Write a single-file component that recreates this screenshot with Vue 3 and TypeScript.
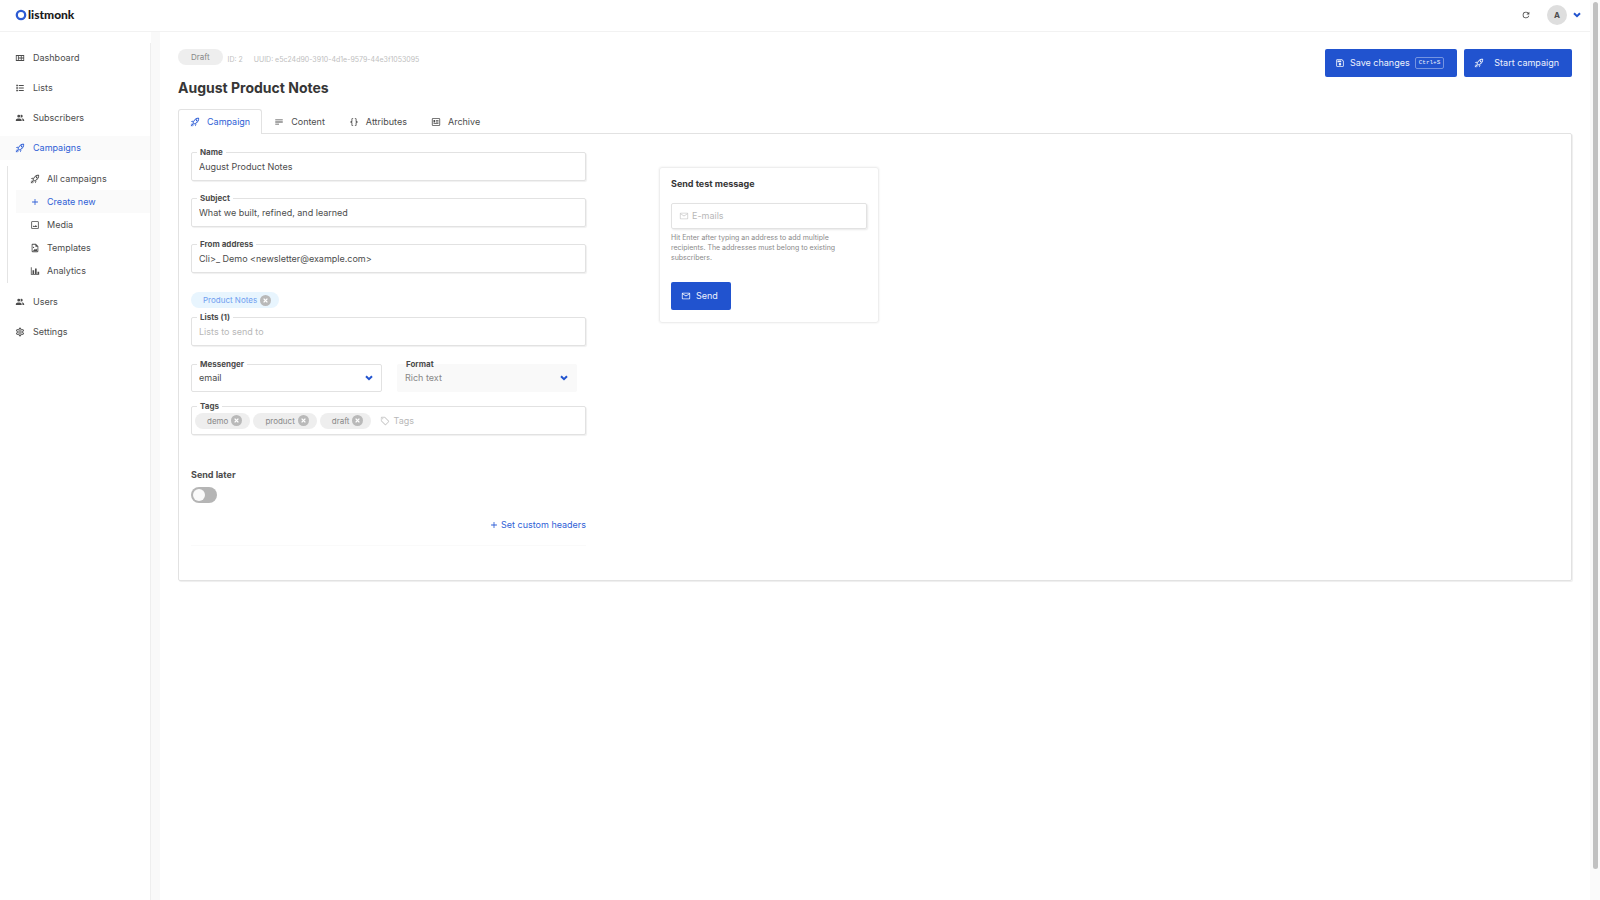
<script setup lang="ts">
import { ref } from 'vue'

const icons = {
  rocket:
    'M13.13 22.19L11.5 18.36C13.07 17.78 14.54 17 15.9 16.09L13.13 22.19M5.64 12.5L1.81 10.87L7.91 8.1C7 9.46 6.22 10.93 5.64 12.5M19.22 4C19.5 4 19.75 4 19.96 4.05C20.13 5.44 19.94 8.3 16.66 11.58C14.96 13.29 12.93 14.6 10.65 15.47L8.5 13.37C9.42 11.06 10.73 9.03 12.42 7.34C15.18 4.58 17.64 4 19.22 4M19.22 2C17.24 2 14.24 2.69 11 5.93C8.81 8.12 7.5 10.53 6.65 12.64C6.37 13.39 6.56 14.21 7.11 14.77L9.24 16.89C9.62 17.27 10.13 17.5 10.66 17.5C10.89 17.5 11.13 17.44 11.36 17.35C13.5 16.53 15.88 15.19 18.07 13C23.73 7.34 21.61 2.39 21.61 2.39S20.7 2 19.22 2M14.54 9.46C13.76 8.68 13.76 7.41 14.54 6.63S16.59 5.85 17.37 6.63C18.14 7.41 18.15 8.68 17.37 9.46C16.59 10.24 15.32 10.24 14.54 9.46M6.24 22L9.88 18.36C9.54 18.27 9.21 18.12 8.91 17.91L4.83 22H6.24M2 22H3.41L8.18 17.24L6.76 15.83L2 20.59V22M2 19.17L6.09 15.09C5.88 14.79 5.73 14.47 5.64 14.12L2 17.76V19.17Z',
  dashboard:
    'M2 5V19H22V5H2M4 7H7V17H4V7M9 7H14V11H9V7M9 13H14V17H9V13M16 7H20V11H16V7M16 13H20V17H16V13Z',
  list: 'M3,4H7V8H3V4M9,5V7H21V5H9M3,10H7V14H3V10M9,11V13H21V11H9M3,16H7V20H3V16M9,17V19H21V17H9',
  people:
    'M16 17V19H2V17S2 13 9 13 16 17 16 17M12.5 7.5A3.5 3.5 0 1 0 9 11A3.5 3.5 0 0 0 12.5 7.5M15.94 13A5.32 5.32 0 0 1 18 17V19H22V17S22 13.37 15.94 13M15 4A3.39 3.39 0 0 0 13.07 4.59A5 5 0 0 1 13.07 10.41A3.39 3.39 0 0 0 15 11A3.5 3.5 0 0 0 15 4Z',
  plus: 'M19,13H13V19H11V13H5V11H11V5H13V11H19V13Z',
  image:
    'M19,19H5V5H19M19,3H5A2,2 0 0,0 3,5V19A2,2 0 0,0 5,21H19A2,2 0 0,0 21,19V5A2,2 0 0,0 19,3M13.96,12.29L11.21,15.83L9.25,13.47L6.5,17H17.5L13.96,12.29Z',
  file: 'M14,2L20,8V20A2,2 0 0,1 18,22H6A2,2 0 0,1 4,20V4A2,2 0 0,1 6,2H14M18,20V9H13V4H6V20H18M17,13V19H7L12,14L14,16M10,10.5A1.5,1.5 0 0,1 8.5,12A1.5,1.5 0 0,1 7,10.5A1.5,1.5 0 0,1 8.5,9A1.5,1.5 0 0,1 10,10.5Z',
  chart: 'M22,21H2V3H4V19H6V10H10V19H12V6H16V19H18V14H22V21Z',
  cog: 'M12,8A4,4 0 0,1 16,12A4,4 0 0,1 12,16A4,4 0 0,1 8,12A4,4 0 0,1 12,8M12,10A2,2 0 0,0 10,12A2,2 0 0,0 12,14A2,2 0 0,0 14,12A2,2 0 0,0 12,10M10,22C9.75,22 9.54,21.82 9.5,21.58L9.13,18.93C8.5,18.68 7.96,18.34 7.44,17.94L4.95,18.95C4.73,19.03 4.46,18.95 4.34,18.73L2.34,15.27C2.21,15.05 2.27,14.78 2.46,14.63L4.57,12.97L4.5,12L4.57,11L2.46,9.37C2.27,9.22 2.21,8.95 2.34,8.73L4.34,5.27C4.46,5.05 4.73,4.96 4.95,5.05L7.44,6.05C7.96,5.66 8.5,5.32 9.13,5.07L9.5,2.42C9.54,2.18 9.75,2 10,2H14C14.25,2 14.46,2.18 14.5,2.42L14.87,5.07C15.5,5.32 16.04,5.66 16.56,6.05L19.05,5.05C19.27,4.96 19.54,5.05 19.66,5.27L21.66,8.73C21.79,8.95 21.73,9.22 21.54,9.37L19.43,11L19.5,12L19.43,13L21.54,14.63C21.73,14.78 21.79,15.05 21.66,15.27L19.66,18.73C19.54,18.95 19.27,19.04 19.05,18.95L16.56,17.95C16.04,18.34 15.5,18.68 14.87,18.93L14.5,21.58C14.46,21.82 14.25,22 14,22H10M11.25,4L10.88,6.61C9.68,6.86 8.62,7.5 7.85,8.39L5.44,7.35L4.69,8.65L6.8,10.2C6.4,11.37 6.4,12.64 6.8,13.8L4.68,15.36L5.43,16.66L7.86,15.62C8.63,16.5 9.68,17.14 10.87,17.38L11.24,20H12.76L13.13,17.39C14.32,17.14 15.37,16.5 16.14,15.62L18.57,16.66L19.32,15.36L17.2,13.81C17.6,12.64 17.6,11.37 17.2,10.2L19.31,8.65L18.56,7.35L16.15,8.39C15.38,7.5 14.32,6.86 13.12,6.62L12.75,4H11.25Z',
  text: 'M21,6V8H3V6H21M3,18H12V16H3V18M3,13H21V11H3V13Z',
  braces:
    'M8,3A2,2 0 0,0 6,5V9A2,2 0 0,1 4,11H3V13H4A2,2 0 0,1 6,15V19A2,2 0 0,0 8,21H10V19H8V14A2,2 0 0,0 6,12A2,2 0 0,0 8,10V5H10V3M16,3A2,2 0 0,1 18,5V9A2,2 0 0,0 20,11H21V13H20A2,2 0 0,0 18,15V19A2,2 0 0,1 16,21H14V19H16V14A2,2 0 0,1 18,12A2,2 0 0,1 16,10V5H14V3H16Z',
  news: 'M20 5L20 19L4 19L4 5H20M20 3H4C2.89 3 2 3.89 2 5V19C2 20.11 2.89 21 4 21H20C21.11 21 22 20.11 22 19V5C22 3.89 21.11 3 20 3M18 15H6V17H18V15M10 7H6V13H10V7M12 9H18V7H12V9M18 11H12V13H18V11Z',
  save: 'M17 3H5C3.89 3 3 3.9 3 5V19C3 20.1 3.89 21 5 21H19C20.1 21 21 20.1 21 19V7L17 3M19 19H5V5H16.17L19 7.83V19M12 12C10.34 12 9 13.34 9 15S10.34 18 12 18 15 16.66 15 15 13.66 12 12 12M6 6H15V10H6V6Z',
  mail: 'M22 6C22 4.9 21.1 4 20 4H4C2.9 4 2 4.9 2 6V18C2 19.1 2.9 20 4 20H20C21.1 20 22 19.1 22 18V6M20 6L12 11L4 6H20M20 18H4V8L12 13L20 8V18Z',
  tag: 'M21.41 11.58L12.41 2.58A2 2 0 0 0 11 2H4A2 2 0 0 0 2 4V11A2 2 0 0 0 2.59 12.42L11.59 21.42A2 2 0 0 0 13 22A2 2 0 0 0 14.41 21.41L21.41 14.41A2 2 0 0 0 22 13A2 2 0 0 0 21.41 11.58M13 20L4 11V4H11L20 13M6.5 5A1.5 1.5 0 1 1 5 6.5A1.5 1.5 0 0 1 6.5 5Z',
  refresh:
    'M17.65,6.35C16.2,4.9 14.21,4 12,4A8,8 0 0,0 4,12A8,8 0 0,0 12,20C15.73,20 18.84,17.45 19.73,14H17.65C16.83,16.33 14.61,18 12,18A6,6 0 0,1 6,12A6,6 0 0,1 12,6C13.66,6 15.14,6.69 16.22,7.78L13,11H20V4L17.65,6.35Z',
}

type IconName = keyof typeof icons
interface NavItem {
  label: string
  icon: IconName
  active?: boolean
  children?: NavItem[]
}

const nav: NavItem[] = [
  { label: 'Dashboard', icon: 'dashboard' },
  { label: 'Lists', icon: 'list' },
  { label: 'Subscribers', icon: 'people' },
  {
    label: 'Campaigns',
    icon: 'rocket',
    active: true,
    children: [
      { label: 'All campaigns', icon: 'rocket' },
      { label: 'Create new', icon: 'plus', active: true },
      { label: 'Media', icon: 'image' },
      { label: 'Templates', icon: 'file' },
      { label: 'Analytics', icon: 'chart' },
    ],
  },
  { label: 'Users', icon: 'people' },
  { label: 'Settings', icon: 'cog' },
]

const tabs: NavItem[] = [
  { label: 'Campaign', icon: 'rocket', active: true },
  { label: 'Content', icon: 'text' },
  { label: 'Attributes', icon: 'braces' },
  { label: 'Archive', icon: 'news' },
]

const name = ref('August Product Notes')
const subject = ref('What we built, refined, and learned')
const from = ref('Cli>_ Demo <newsletter@example.com>')
const lists = ref(['Product Notes'])
const tags = ref(['demo', 'product', 'draft'])
const sendLater = ref(false)

const remove = (items: string[], item: string) => {
  items.splice(items.indexOf(item), 1)
}
</script>

<template>
  <div class="app">
    <div class="page">
      <header class="topbar">
        <a href="#" class="logo">
          <svg viewBox="0 0 12 12"><circle cx="6" cy="6" r="4.2" /></svg>
          <span>listmonk</span>
        </a>
        <div class="user">
          <button type="button" class="plain" aria-label="Reload">
            <svg class="icon" viewBox="0 0 24 24"><path :d="icons.refresh" /></svg>
          </button>
          <button type="button" class="plain account" aria-label="Account">
            <span class="avatar">A</span>
            <svg class="chevron" viewBox="0 0 8 6"><path d="M1 1.2L4 4.2L7 1.2" /></svg>
          </button>
        </div>
      </header>

      <div class="body">
        <nav class="sidebar">
          <ul class="menu">
            <li v-for="item in nav" :key="item.label">
              <a href="#" class="link" :class="{ active: item.active }">
                <svg class="icon" viewBox="0 0 24 24"><path :d="icons[item.icon]" /></svg>{{ item.label }}
              </a>
              <ul v-if="item.children" class="submenu">
                <li v-for="sub in item.children" :key="sub.label">
                  <a href="#" class="link sub" :class="{ active: sub.active }">
                    <svg class="icon" viewBox="0 0 24 24"><path :d="icons[sub.icon]" /></svg>{{ sub.label }}
                  </a>
                </li>
              </ul>
            </li>
          </ul>
        </nav>

        <main class="main">
          <div class="heading">
            <div>
              <div class="meta">
                <span class="status">Draft</span>
                <span class="ids"><span>ID: 2</span><span>UUID: e5c24d90-3910-4d1e-9579-44e3f1053095</span></span>
              </div>
              <h1>August Product Notes</h1>
            </div>
            <div class="actions">
              <button type="button" class="btn">
                <svg class="icon" viewBox="0 0 24 24"><path :d="icons.save" /></svg>
                <span>Save changes</span><kbd>Ctrl+S</kbd>
              </button>
              <button type="button" class="btn start">
                <svg class="icon" viewBox="0 0 24 24"><path :d="icons.rocket" /></svg>
                <span>Start campaign</span>
              </button>
            </div>
          </div>

          <div class="tabs" role="tablist">
            <button
              v-for="tab in tabs"
              :key="tab.label"
              type="button"
              role="tab"
              class="tab"
              :class="{ active: tab.active }"
              :aria-selected="!!tab.active"
            >
              <svg class="icon" viewBox="0 0 24 24"><path :d="icons[tab.icon]" /></svg>{{ tab.label }}
            </button>
          </div>

          <section class="panel">
            <form @submit.prevent>
              <div class="field">
                <label for="name">Name</label>
                <input id="name" v-model="name" class="box" type="text" />
              </div>
              <div class="field">
                <label for="subject">Subject</label>
                <input id="subject" v-model="subject" class="box" type="text" />
              </div>
              <div class="field">
                <label for="from">From address</label>
                <input id="from" v-model="from" class="box" type="text" />
              </div>

              <div class="list-chips">
                <span v-for="item in lists" :key="item" class="chip blue">
                  {{ item }}
                  <button type="button" class="plain" :aria-label="'Remove ' + item" @click="remove(lists, item)">
                    <svg class="close" viewBox="0 0 10 10"><circle cx="5" cy="5" r="5" /><path d="M3.3 3.3L6.7 6.7M6.7 3.3L3.3 6.7" /></svg>
                  </button>
                </span>
              </div>
              <div class="field">
                <label for="lists">Lists ({{ lists.length }})</label>
                <input id="lists" class="box" type="text" placeholder="Lists to send to" />
              </div>

              <div class="pair">
                <div class="field">
                  <label for="messenger">Messenger</label>
                  <select id="messenger" class="box">
                    <option>email</option>
                  </select>
                  <svg class="chevron" viewBox="0 0 8 6"><path d="M1 1.2L4 4.2L7 1.2" /></svg>
                </div>
                <div class="field off">
                  <label for="format">Format</label>
                  <select id="format" class="box" disabled>
                    <option>Rich text</option>
                  </select>
                  <svg class="chevron" viewBox="0 0 8 6"><path d="M1 1.2L4 4.2L7 1.2" /></svg>
                </div>
              </div>

              <div class="field">
                <label for="tags">Tags</label>
                <div class="box tagbox">
                  <span v-for="item in tags" :key="item" class="chip">
                    {{ item }}
                    <button type="button" class="plain" :aria-label="'Remove ' + item" @click="remove(tags, item)">
                      <svg class="close" viewBox="0 0 10 10"><circle cx="5" cy="5" r="5" /><path d="M3.3 3.3L6.7 6.7M6.7 3.3L3.3 6.7" /></svg>
                    </button>
                  </span>
                  <svg class="icon" viewBox="0 0 24 24"><path :d="icons.tag" /></svg>
                  <input id="tags" type="text" placeholder="Tags" />
                </div>
              </div>

              <div class="later">
                <label for="later">Send later</label>
                <input id="later" v-model="sendLater" type="checkbox" role="switch" class="switch" />
              </div>

              <a href="#" class="headers">
                <svg class="icon" viewBox="0 0 24 24"><path :d="icons.plus" /></svg>Set custom headers
              </a>
              <hr />
            </form>

            <form class="test" @submit.prevent>
              <label for="emails">Send test message</label>
              <div class="mailbox">
                <svg class="icon" viewBox="0 0 24 24"><path :d="icons.mail" /></svg>
                <input id="emails" type="text" placeholder="E-mails" />
              </div>
              <p>Hit Enter after typing an address to add multiple recipients. The addresses must belong to existing subscribers.</p>
              <button type="button" class="btn">
                <svg class="icon" viewBox="0 0 24 24"><path :d="icons.mail" /></svg><span>Send</span>
              </button>
            </form>
          </section>
        </main>
      </div>
    </div>
    <div class="track"><div class="thumb"></div></div>
  </div>
</template>

<style>
body {
  margin: 0;
  background: #fff;
}
</style>

<style scoped>
* {
  box-sizing: border-box;
}
.app {
  display: flex;
  min-height: 100vh;
  font: 9px/14px Inter, sans-serif;
  color: #4c4c4c;
}
.page {
  flex: 1;
  min-width: 0;
  display: flex;
  flex-direction: column;
}
.track {
  width: 10px;
  padding: 2px 2px 31px 3px;
  background: #fafafa;
  display: flex;
}
.thumb {
  flex: 1;
  border-radius: 3px;
  background: #c1c1c1;
}
button,
input,
select {
  font: inherit;
  color: inherit;
}
a {
  color: inherit;
  text-decoration: none;
}
ul {
  list-style: none;
  margin: 0;
  padding: 0;
}
.icon {
  width: 10px;
  height: 10px;
  flex: none;
  fill: currentColor;
}
.plain {
  border: 0;
  padding: 0;
  background: none;
  display: flex;
  align-items: center;
}
.chevron {
  width: 8px;
  height: 6px;
  fill: none;
  stroke: #2153cf;
  stroke-width: 2;
}

.topbar {
  height: 32px;
  padding: 0 9px 2px 15px;
  border-bottom: 1px solid #f2f2f2;
  display: flex;
  align-items: center;
  justify-content: space-between;
}
.logo {
  display: flex;
  align-items: center;
  gap: 1px;
  font: 900 12px/14px Lato, sans-serif;
  color: #1c1c1c;
}
.logo svg {
  width: 12px;
  height: 12px;
  fill: none;
  stroke: #2d5bd3;
  stroke-width: 2.3;
}
.user {
  display: flex;
  align-items: center;
  gap: 16px;
}
.account {
  gap: 6px;
}
.avatar {
  width: 20px;
  height: 20px;
  border-radius: 50%;
  background: #dedede;
  font-size: 8px;
  font-weight: 700;
  line-height: 20px;
}

.body {
  flex: 1;
  display: flex;
}
.sidebar {
  width: 160px;
  flex: none;
  padding-top: 11px;
  border-right: 9px solid #f9f9f9;
}
.menu {
  height: 100%;
  border-right: 1px solid #eee;
}
.link {
  height: 24px;
  margin: 3px 0;
  padding-left: 15px;
  display: flex;
  align-items: center;
  gap: 8px;
}
.menu > li {
  display: flow-root;
}
.submenu {
  margin: 6px 0 4px 7px;
  padding: 1px 0 1px 8px;
  border-left: 1px solid #e4e4e4;
}
.sub {
  height: 23px;
  margin: 0;
  padding-left: 14px;
  gap: 7px;
}
.active {
  color: #2f5fd6;
}
.link.active {
  background: #fafafa;
}

.main {
  flex: 1;
  min-width: 0;
  padding: 17px 18px 20px;
}
.heading {
  display: flex;
  justify-content: space-between;
  align-items: flex-start;
}
.meta {
  display: flex;
  gap: 5px;
}
.status {
  height: 16px;
  padding: 0 13px;
  border-radius: 8px;
  background: #eee;
  color: #888;
  font-size: 8px;
  line-height: 16px;
}
.ids {
  display: flex;
  gap: 11px;
  padding-top: 4px;
  font-size: 7px;
  color: #c0c0c0;
}
h1 {
  margin: 11px 0;
  font-size: 14px;
  line-height: 20px;
  font-weight: 700;
  color: #363636;
}
.actions {
  display: flex;
  gap: 7px;
}
.btn {
  height: 28px;
  padding: 0 13px 0 10px;
  border: 0;
  border-radius: 2px;
  background: #2153cf;
  color: #eef2fc;
  display: flex;
  align-items: center;
  gap: 5px;
}
.start {
  gap: 10px;
}
kbd {
  height: 12px;
  padding: 0 3px;
  border: 1px solid #7594e1;
  border-radius: 2px;
  font: 6px/10px "Liberation Mono", monospace;
}

.tabs {
  display: flex;
  position: relative;
}
.tab {
  height: 25px;
  padding: 0 11px;
  border: 1px solid transparent;
  border-bottom: 0;
  border-radius: 3px 3px 0 0;
  background: none;
  display: flex;
  align-items: center;
  gap: 7px;
}
.tab.active {
  background: #fff;
  border-color: #e2e2e2;
}
.panel {
  margin-top: -1px;
  padding: 18px 12px 34px;
  border: 1px solid #e2e2e2;
  border-radius: 0 2px 2px 2px;
  box-shadow: 1px 1px 1px #eee;
  display: grid;
  grid-template-columns: 395fr 220fr 607fr;
  column-gap: 73px;
  align-items: start;
}
.field {
  position: relative;
  margin-bottom: 17px;
}
.field label {
  position: absolute;
  left: 6px;
  top: -6px;
  padding: 0 3px;
  background: #fff;
  font-size: 8px;
  line-height: 12px;
  font-weight: 700;
}
.box {
  display: block;
  width: 100%;
  height: 29px;
  padding: 0 7px 1px;
  border: 1px solid #e2e2e2;
  border-radius: 2px;
  box-shadow: 1px 1px 1px #f0f0f0;
  background: #fff;
  outline: none;
}
::placeholder {
  color: #b8b8b8;
  opacity: 1;
}
.list-chips {
  display: flex;
  padding-top: 2px;
  margin-bottom: 9px;
}
.chip {
  height: 16px;
  padding: 0 8px 0 12px;
  border-radius: 8px;
  background: #eee;
  color: #888;
  font-size: 8px;
  display: flex;
  align-items: center;
  gap: 3px;
}
.blue {
  background: #e8f5fe;
  color: #6f9df0;
}
.close {
  width: 11px;
  height: 11px;
  fill: #b9b9b9;
  stroke: none;
}
.close path {
  stroke: #fff;
  stroke-width: 1.2;
}
.pair {
  display: grid;
  grid-template-columns: 191fr 180fr;
  gap: 15px;
  padding: 1px 9px 0 0;
}
.pair .field {
  margin-bottom: 14px;
}
select.box {
  height: 28px;
  appearance: none;
  box-shadow: none;
}
.off .box {
  border-color: #f9f9f9;
  background: #f9f9f9;
  color: #888;
  opacity: 1;
}
.off label {
  background: linear-gradient(#fff 50%, #f9f9f9 50%);
}
.field .chevron {
  position: absolute;
  right: 9px;
  top: 11px;
}
.tagbox {
  display: flex;
  align-items: center;
  gap: 3px;
  padding: 0 3px;
}
.tagbox .icon {
  margin-left: 6px;
  color: #ccc;
}
.tagbox input,
.mailbox input {
  flex: 1;
  min-width: 0;
  border: 0;
  padding: 0;
  background: none;
  outline: none;
}
.later {
  margin-top: 33px;
  display: flex;
  flex-direction: column;
  align-items: flex-start;
  gap: 5px;
}
.later label,
.test label {
  font-weight: 700;
}
.switch {
  appearance: none;
  width: 26px;
  height: 16px;
  margin: 0;
  padding: 2px;
  border-radius: 8px;
  background: #b5b5b5;
}
.switch::before {
  content: '';
  display: block;
  width: 12px;
  height: 12px;
  border-radius: 50%;
  background: #fafafa;
}
.switch:checked::before {
  margin-left: auto;
}
.headers {
  margin-top: 15px;
  display: flex;
  align-items: center;
  justify-content: flex-end;
  gap: 2px;
  color: #2f5fd6;
}
hr {
  margin: 13px 0 0;
  border: 0;
  border-top: 1px solid #fafafa;
}

.test {
  margin-top: 15px;
  padding: 9px 11px 12px;
  border: 1px solid #eee;
  border-radius: 3px;
  box-shadow: 0 0 2px #e6e6e6;
}
.test label {
  display: block;
  color: #363636;
}
.mailbox {
  height: 26px;
  margin: 12px 0 4px;
  padding: 0 7px 1px;
  border: 1px solid #e2e2e2;
  border-radius: 2px;
  box-shadow: 1px 1px 2px #e8e8e8;
  display: flex;
  align-items: center;
  gap: 3px;
}
.mailbox .icon {
  color: #d0d0d0;
}
.test p {
  margin: 0 0 19px;
  padding-right: 20px;
  font-size: 7px;
  line-height: 10px;
  color: #8a8a8a;
}
</style>
